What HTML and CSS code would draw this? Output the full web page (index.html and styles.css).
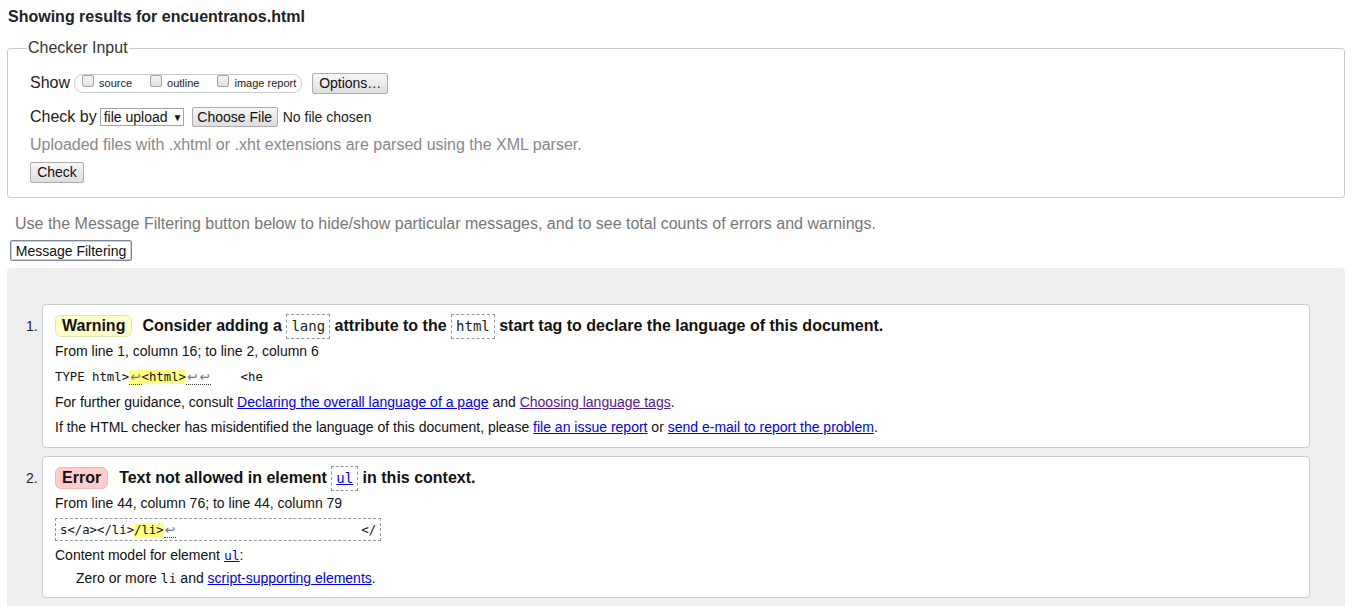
FILE: index.html
```html
<!DOCTYPE html>
<html lang="en">
<head>
<meta charset="utf-8">
<title>Showing results for encuentranos.html</title>
<link rel="stylesheet" href="styles.css">
</head>
<body>
<h2 class="title">Showing results for encuentranos.html</h2>
<fieldset class="checker">
  <legend class="legend">Checker Input</legend>
  <div class="row row-show">
    <span class="row-label">Show</span>
    <span class="pill">
      <label class="opt"><input type="checkbox" class="cb"><span>source</span></label>
      <label class="opt"><input type="checkbox" class="cb"><span>outline</span></label>
      <label class="opt"><input type="checkbox" class="cb"><span>image report</span></label>
    </span>
    <button class="btn btn-options" type="button">Options…</button>
  </div>
  <div class="row row-check">
    <span class="row-label">Check by</span>
    <span class="select"><span>file upload</span><span class="arrow">▼</span></span>
    <button class="btn btn-file" type="button">Choose File</button>
    <span class="nofile">No file chosen</span>
  </div>
  <p class="note">Uploaded files with .xhtml or .xht extensions are parsed using the XML parser.</p>
  <div class="row row-submit">
    <button class="btn btn-check" type="button">Check</button>
  </div>
</fieldset>
<p class="filter-info">Use the Message Filtering button below to hide/show particular messages, and to see total counts of errors and warnings.</p>
<button class="btn-filter" type="button">Message Filtering</button>
<div class="results">
  <ol class="messages">
    <li class="msg">
      <span class="num">1.</span>
      <div class="card">
        <p class="head"><span class="badge badge-warn">Warning</span><span class="head-text">Consider adding a <code class="cbox">lang</code> attribute to the <code class="cbox">html</code> start tag to declare the language of this document.</span></p>
        <p class="line">From line 1, column 16; to line 2, column 6</p>
        <p class="line extract"><code class="ext">TYPE html&gt;<span class="u hl"><span class="lf">↩</span></span><span class="hl">&lt;html&gt;</span><span class="u"><span class="lf">↩</span><span class="lf">↩</span></span>    &lt;he</code></p>
        <p class="line">For further guidance, consult <a class="link" href="#a">Declaring the overall language of a page</a> and <a class="link visited" href="#b">Choosing language tags</a>.</p>
        <p class="line">If the HTML checker has misidentified the language of this document, please <a class="link" href="#c">file an issue report</a> or <a class="link" href="#d">send e-mail to report the problem</a>.</p>
      </div>
    </li>
    <li class="msg">
      <span class="num">2.</span>
      <div class="card">
        <p class="head"><span class="badge badge-err">Error</span><span class="head-text">Text not allowed in element <code class="cbox"><a class="link" href="#e">ul</a></code> in this context.</span></p>
        <p class="line">From line 44, column 76; to line 44, column 79</p>
        <p class="extract2"><code class="ext">s&lt;/a&gt;&lt;/li&gt;<span class="hl">/li&gt;</span><span class="u"><span class="lf">↩</span></span>                         &lt;/</code></p>
        <p class="line cm">Content model for element <code class="mono"><a class="link" href="#e">ul</a></code>:</p>
        <p class="dd">Zero or more <code class="mono">li</code> and <a class="link" href="#f">script-supporting elements</a>.</p>
      </div>
    </li>
  </ol>
</div>
</body>
</html>
```
FILE: styles.css
```css
html, body {
  margin: 0;
  padding: 0;
  background: #fff;
}
body {
  font-family: "Liberation Sans", Arial, sans-serif;
  color: #222;
}
.title {
  margin: 8px 0 0 8px;
  font-size: 16px;
  line-height: 18px;
  font-weight: bold;
  color: #222;
}
.checker {
  margin: 13px 7px 0 7px;
  padding: 0 20px 14px 22px;
  border: 1px solid #ccc;
  border-radius: 3px;
}
.legend {
  padding: 0 1px;
  margin-left: -3px;
  font-size: 16px;
  line-height: 18px;
  color: #333;
}
.row {
  display: flex;
  align-items: center;
}
.row-label {
  font-size: 16px;
  color: #222;
}
.row-show {
  margin-top: 15px;
  height: 22px;
}
.pill {
  display: inline-flex;
  align-items: center;
  height: 17px;
  margin-left: 4px;
  padding: 0 5px 0 7px;
  border: 1px solid #ccc;
  border-radius: 9px;
}
.opt {
  display: inline-flex;
  align-items: center;
  font-size: 11px;
  color: #222;
  margin-right: 18px;
}
.opt:last-child {
  margin-right: 0;
}
.cb {
  appearance: none;
  -webkit-appearance: none;
  width: 12px;
  height: 12px;
  margin: -4px 5px 0 0;
  border: 1px solid #a4a4a4;
  border-radius: 2px;
  background: linear-gradient(#f4f4f4, #e2e2e2);
}
.btn {
  font-family: "Liberation Sans", Arial, sans-serif;
  font-size: 14px;
  color: #111;
  border: 1px solid #adadad;
  border-radius: 2px;
  background: linear-gradient(#f7f7f7, #dedede);
  padding: 0 7px;
  margin: 0;
  height: 21px;
  line-height: 19px;
}
.btn-options {
  margin-left: 10px;
  width: 76px;
  padding: 0;
}
.row-check {
  margin-top: 13px;
  height: 20px;
}
.select {
  display: inline-flex;
  align-items: center;
  white-space: nowrap;
  margin-left: 3px;
  height: 16px;
  width: 79px;
  padding: 0 0 0 3px;
  box-sizing: content-box;
  border: 1px solid #a4a4a4;
  background: #fff;
  font-size: 14px;
  color: #111;
}
.arrow {
  font-size: 10px;
  margin-left: 5px;
}
.btn-file {
  margin-left: 8px;
  width: 86px;
  padding: 0;
  height: 20px;
  line-height: 18px;
}
.nofile {
  margin-left: 5px;
  font-size: 14px;
  color: #222;
}
.note {
  margin: 8px 0 0 0;
  font-size: 16px;
  line-height: 20px;
  color: #888;
}
.row-submit {
  margin-top: 7px;
}
.btn-check {
  width: 54px;
  padding: 0;
}
.filter-info {
  margin: 16px 0 0 15px;
  font-size: 16px;
  line-height: 20px;
  color: #777;
}
.btn-filter {
  display: block;
  margin: 6px 0 0 10px;
  height: 21px;
  width: 122px;
  padding: 0;
  font-family: "Liberation Sans", Arial, sans-serif;
  font-size: 14px;
  color: #111;
  background: #fff;
  border: 1px solid #7a86a0;
  border-radius: 2px;
  box-shadow: inset 0 0 0 1px #c8d0de;
}
.results {
  margin: 7px 7px 0 7px;
  padding: 36px 35px 20px 19px;
  background: #eee;
  border-radius: 4px;
}
.messages {
  list-style: none;
  margin: 0;
  padding: 0;
  display: flex;
  flex-direction: column;
  gap: 8px;
}
.msg {
  display: flex;
  align-items: flex-start;
}
.num {
  width: 16px;
  flex: none;
  font-size: 14px;
  color: #222;
  padding-top: 14px;
}
.card {
  flex: 1;
  background: #fff;
  border: 1px solid #ccc;
  border-radius: 4px;
  padding: 8px 12px 7px 12px;
}
.card p {
  margin: 0;
}
.head {
  display: flex;
  align-items: center;
  height: 26px;
  font-size: 16px;
  font-weight: bold;
  color: #111;
}
.badge {
  display: inline-block;
  height: 20px;
  line-height: 20px;
  padding: 0 6px;
  border-radius: 6px;
  font-weight: bold;
  margin-right: 10px;
}
.badge-warn {
  background: #ffffc8;
  border: 1px solid #e3e3b8;
}
.badge-err {
  background: #ffcccc;
  border: 1px solid #eebbbb;
  margin-right: 11px;
}
.cbox {
  display: inline-block;
  font-family: "DejaVu Sans Mono", monospace;
  font-weight: normal;
  font-size: 14px;
  line-height: 23px;
  padding: 0 4px;
  border: 1px dashed #999;
  color: #222;
  vertical-align: middle;
}
.line {
  font-size: 14px;
  line-height: 25px;
  color: #111;
}
.ext {
  font-family: "DejaVu Sans Mono", monospace;
  font-size: 12.3px;
  white-space: pre;
  color: #111;
}
.hl {
  background: #ffff80;
}
.lf {
  display: inline-block;
  width: 12.5px;
  text-align: center;
  font-family: "DejaVu Sans", sans-serif;
  color: #777;
}
.u {
  border-bottom: 1px dotted #444;
}
.extract2 {
  display: inline-flex;
  align-items: center;
  height: 21px;
  margin-top: 2px !important;
  padding: 0 4px;
  border: 1px dashed #999;
}
.cm {
  line-height: 25px;
  margin-top: 2px !important;
}
.mono {
  font-family: "DejaVu Sans Mono", monospace;
  font-size: 13px;
}
.dd {
  margin-left: 21px !important;
  font-size: 14px;
  line-height: 20px;
  margin-bottom: 1px !important;
  color: #111;
}
.link {
  color: #00e;
  text-decoration: underline;
}
.visited {
  color: #551a8b;
}
```
